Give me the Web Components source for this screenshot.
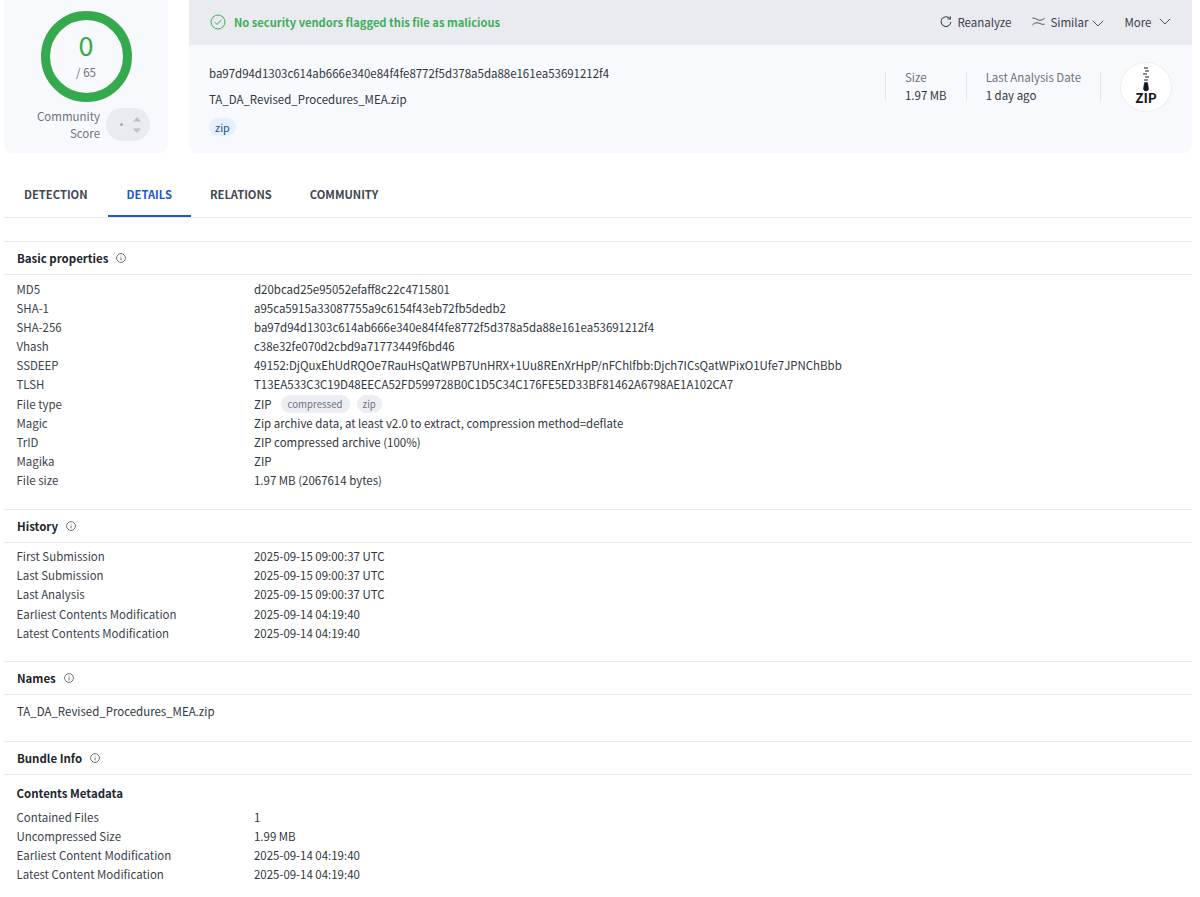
<!DOCTYPE html>
<html>
<head>
<meta charset="utf-8">
<title>VirusTotal file details</title>
<style>
body { margin: 0; background: #fff; font-family: "Noto Sans CJK SC", "Noto Sans", sans-serif; font-size: 11.46px; color: #2f3640; }
vt-report { display: block; }
</style>
</head>
<body>
<vt-report></vt-report>
<script>
const INFO_ICON = `<svg width="10" height="10" viewBox="0 0 10 10" fill="none" stroke="#4a5360" stroke-width=".8"><circle cx="5" cy="5" r="4.400"/><path d="M5 4.400v3"/><path d="M5 2.600v.8"/></svg>`;
const CHEVRON = `<svg width="12" height="7" viewBox="0 0 12 7" fill="none" stroke="#4a5360" stroke-width="1"><path d="M.8.8 6 6l5.200-5.200"/></svg>`;

class ScoreCard extends HTMLElement {
    constructor() {
        super();
        this.attachShadow({ mode: "open" });
        this.shadowRoot.innerHTML = `
<style>
:host { display: flex; flex-direction: column; align-items: center; box-sizing: border-box; width: 164px; height: 153px; background: #f8f9fc; border-radius: 0 0 8px 8px; padding-top: 11px; }
.ring { box-sizing: border-box; width: 91px; height: 91px; border: 9px solid #34a94d; border-radius: 50%; display: flex; flex-direction: column; align-items: center; }
.score { font-size: 27px; line-height: 36px; color: #34a94d; margin-top: 7px; }
.total { font-size: 11.500px; line-height: 16px; color: #6b7380; margin-top: 1px; }
.community { display: flex; align-items: center; gap: 6px; margin-top: 6px; margin-left: 15px; }
.label { text-align: right; color: #6b7380; font-size: 11.500px; line-height: 16.500px; }
.vote { position: relative; width: 44px; height: 33px; border-radius: 17px; background: #e9ebf1; display: flex; align-items: center; }
.dot { width: 3px; height: 3px; border-radius: 50%; background: #a4a9b4; margin-left: 14px; }
.vote svg { position: absolute; right: 8px; top: 8px; }
</style>
<div class="ring">
<div class="score">0</div>
<div class="total">/ 65</div>
</div>
<div class="community">
<div class="label">Community<br>Score</div>
<div class="vote">
<div class="dot"></div>
<svg width="10" height="18" viewBox="0 0 10 18" fill="#bcc0c9"><path d="M5 1l4 4.500H1z"/><path d="M5 17l4-4.500H1z"/></svg>
</div>
</div>`;
    }
}

class FileSummary extends HTMLElement {
    constructor() {
        super();
        this.attachShadow({ mode: "open" });
        this.shadowRoot.innerHTML = `
<style>
:host { display: block; flex: 1; height: 153px; background: #f8f9fc; border-radius: 0 0 8px 8px; }
.banner { display: flex; align-items: center; height: 45px; background: #e9ebf0; padding: 0 21px 2px; box-sizing: border-box; }
.verdict { display: flex; align-items: center; gap: 8px; color: #3fae5a; font-weight: 700; font-size: 11.150px; }
.actions { margin-left: auto; display: flex; align-items: center; color: #39414d; font-size: 11.500px; }
.action { display: flex; align-items: center; gap: 5px; margin-left: 21px; }
.action.more { margin-left: 20px; }
.action .caret { margin-left: -1px; }
.body { display: flex; padding: 0 20px; }
.ident { flex: 1; padding-top: 19px; }
.line { line-height: 18px; height: 18px; margin-bottom: 8px; }
.line + .line { margin-bottom: 10px; }
.tag { display: inline-block; background: #e4f0fb; color: #24507f; border-radius: 10px; font-size: 10.800px; line-height: 18px; padding: 0 6px; }
.stats { display: flex; margin-top: 27px; height: 29px; }
.stat { border-left: 1px solid #e3e5ea; padding: 0 19px; }
.stat:last-child { border-right: 1px solid #e3e5ea; }
.stat b { display: block; font-weight: 400; color: #6b7380; line-height: 16px; margin-top: -3px; }
.stat span { display: block; line-height: 20px; }
.badge { box-sizing: border-box; width: 52px; height: 50px; border-radius: 50%; background: #fff; border: 1px solid #eceef2; display: flex; flex-direction: column; align-items: center; margin: 17px 0 0 19px; padding-top: 3px; }
.badge span { font-weight: 700; font-size: 13.500px; line-height: 14px; color: #14181f; margin-top: -3px; }
</style>
<div class="banner">
<div class="verdict">
<svg width="16" height="16" viewBox="0 0 16 16" fill="none" stroke="#3fae5a" stroke-width="1"><circle cx="8" cy="8" r="7"/><path d="M4.800 8.200 7.100 10.500 11.300 5.800"/></svg>
No security vendors flagged this file as malicious
</div>
<div class="actions">
<div class="action"><svg width="12" height="13" viewBox="0 0 13 13" fill="none" stroke="#39414d" stroke-width="1.100"><path d="M10.600 3.200A5.300 5.300 0 1 0 11.800 7"/><path d="M11.200.8v3h-3"/></svg>Reanalyze</div>
<div class="action"><svg width="13" height="9" viewBox="0 0 13 9" fill="none" stroke="#39414d" stroke-width=".9"><path d="M.5 1.200C3 .6 4.500 2.400 6.500 3s3.500.2 6-1.800"/><path d="M.5 7.800C3 5.800 4.500 5.400 6.500 6s3.500 1.800 6 1.200"/></svg>Similar<span class="caret">${CHEVRON}</span></div>
<div class="action more">More&nbsp;${CHEVRON}</div>
</div>
</div>
<div class="body">
<div class="ident">
<div class="line">ba97d94d1303c614ab666e340e84f4fe8772f5d378a5da88e161ea53691212f4</div>
<div class="line">TA_DA_Revised_Procedures_MEA.zip</div>
<span class="tag">zip</span>
</div>
<div class="stats">
<div class="stat"><b>Size</b><span>1.97 MB</span></div>
<div class="stat"><b>Last Analysis Date</b><span>1 day ago</span></div>
</div>
<div class="badge">
<svg width="8" height="27" viewBox="0 0 8 27" fill="none" stroke="#14181f"><path d="M2 2h4M3 5h4M1 8h4M3 11h4M2 14h4" stroke-width="1"/><path d="M2.500 16.500h3l1 6a2.500 2.500 0 0 1-5 0z" fill="#14181f" stroke-width=".5"/></svg>
<span>ZIP</span>
</div>
</div>`;
    }
}

class TabBar extends HTMLElement {
    constructor() {
        super();
        this.attachShadow({ mode: "open" });
        this.shadowRoot.innerHTML = `
<style>
:host { display: flex; height: 64px; margin: 0 8px 0 4px; border-bottom: 1px solid #e6e8ed; }
.tab { display: flex; align-items: center; height: 64px; padding: 20px 19px 0; box-sizing: border-box; font-weight: 700; font-size: 11.200px; color: #3f4753; border-bottom: 2px solid transparent; }
.tab.first { padding: 20px 20px 0; }
.active { color: #2456c9; border-bottom-color: #2456c9; }
</style>
<div class="tab first">DETECTION</div>
<div class="tab active">DETAILS</div>
<div class="tab">RELATIONS</div>
<div class="tab">COMMUNITY</div>`;
    }
}

class PropSection extends HTMLElement {
    constructor() {
        super();
        this.attachShadow({ mode: "open" });
        this.shadowRoot.innerHTML = `
<style>
:host { display: block; margin: 0 8px 0 4px; }
.head { display: flex; align-items: center; gap: 8px; height: 31px; padding-bottom: 1px; border-top: 1px solid #e6e8ed; border-bottom: 1px solid #e6e8ed; padding-left: 13px; font-weight: 700; color: #20262e; }
.rows { padding: var(--rows-top, 4px) 0 0 12.500px; }
</style>
<div class="head"><span class="title"></span>${INFO_ICON}</div>
<div class="rows"><slot></slot></div>`;
    }

    connectedCallback() {
        this.shadowRoot.querySelector(".title").textContent = this.getAttribute("title");
    }
}

class PropRow extends HTMLElement {
    constructor() {
        super();
        this.attachShadow({ mode: "open" });
        this.shadowRoot.innerHTML = `
<style>
:host { display: flex; height: 19.200px; line-height: 19.200px; color: #2f3640; }
.key { width: 237.500px; flex: none; color: #39414d; }
.val { white-space: nowrap; display: flex; align-items: center; }
</style>
<div class="key"></div>
<div class="val"><slot></slot></div>`;
    }

    connectedCallback() {
        this.shadowRoot.querySelector(".key").textContent = this.getAttribute("key");
    }
}

class GreyTag extends HTMLElement {
    constructor() {
        super();
        this.attachShadow({ mode: "open" });
        this.shadowRoot.innerHTML = `
<style>
:host { display: inline-block; background: #eceef3; color: #6b7380; border-radius: 10px; font-size: 9.700px; line-height: 18px; padding: 0 7px; margin-left: 9px; }
:host(.next) { margin-left: 7px; padding: 0 6px; }
</style>
<slot></slot>`;
    }
}

class VtReport extends HTMLElement {
    constructor() {
        super();
        this.attachShadow({ mode: "open" });
        this.shadowRoot.innerHTML = `
<style>
:host { display: block; }
.top { display: flex; gap: 21px; margin: 0 8px 0 4px; }
.gap { height: 23px; }
.space-a { height: 18.500px; }
.space-b { height: 18px; }
.space-c { height: 20px; }
.sub { font-weight: 700; color: #20262e; height: 19px; line-height: 19px; margin: 5px 0 4.600px; }
.names { --rows-top: 7px; }
.name { height: 19px; line-height: 19px; margin-left: .5px; }
.basic { --rows-top: 4.500px; }
</style>
<div class="top"><score-card></score-card><file-summary></file-summary></div>
<tab-bar></tab-bar>
<div class="gap"></div>
<prop-section class="basic" title="Basic properties">
<prop-row key="MD5">d20bcad25e95052efaff8c22c4715801</prop-row>
<prop-row key="SHA-1">a95ca5915a33087755a9c6154f43eb72fb5dedb2</prop-row>
<prop-row key="SHA-256">ba97d94d1303c614ab666e340e84f4fe8772f5d378a5da88e161ea53691212f4</prop-row>
<prop-row key="Vhash">c38e32fe070d2cbd9a71773449f6bd46</prop-row>
<prop-row key="SSDEEP">49152:DjQuxEhUdRQOe7RauHsQatWPB7UnHRX+1Uu8REnXrHpP/nFChlfbb:Djch7ICsQatWPixO1Ufe7JPNChBbb</prop-row>
<prop-row key="TLSH">T13EA533C3C19D48EECA52FD599728B0C1D5C34C176FE5ED33BF81462A6798AE1A102CA7</prop-row>
<prop-row key="File type">ZIP<grey-tag>compressed</grey-tag><grey-tag class="next">zip</grey-tag></prop-row>
<prop-row key="Magic">Zip archive data, at least v2.0 to extract, compression method=deflate</prop-row>
<prop-row key="TrID">ZIP compressed archive (100%)</prop-row>
<prop-row key="Magika">ZIP</prop-row>
<prop-row key="File size">1.97 MB (2067614 bytes)</prop-row>
</prop-section>
<div class="space-a"></div>
<prop-section title="History">
<prop-row key="First Submission">2025-09-15 09:00:37 UTC</prop-row>
<prop-row key="Last Submission">2025-09-15 09:00:37 UTC</prop-row>
<prop-row key="Last Analysis">2025-09-15 09:00:37 UTC</prop-row>
<prop-row key="Earliest Contents Modification">2025-09-14 04:19:40</prop-row>
<prop-row key="Latest Contents Modification">2025-09-14 04:19:40</prop-row>
</prop-section>
<div class="space-b"></div>
<prop-section class="names" title="Names">
<div class="name">TA_DA_Revised_Procedures_MEA.zip</div>
</prop-section>
<div class="space-c"></div>
<prop-section title="Bundle Info">
<div class="sub">Contents Metadata</div>
<prop-row key="Contained Files">1</prop-row>
<prop-row key="Uncompressed Size">1.99 MB</prop-row>
<prop-row key="Earliest Content Modification">2025-09-14 04:19:40</prop-row>
<prop-row key="Latest Content Modification">2025-09-14 04:19:40</prop-row>
</prop-section>`;
    }
}

customElements.define("score-card", ScoreCard);
customElements.define("file-summary", FileSummary);
customElements.define("tab-bar", TabBar);
customElements.define("prop-section", PropSection);
customElements.define("prop-row", PropRow);
customElements.define("grey-tag", GreyTag);
customElements.define("vt-report", VtReport);
</script>
</body>
</html>
